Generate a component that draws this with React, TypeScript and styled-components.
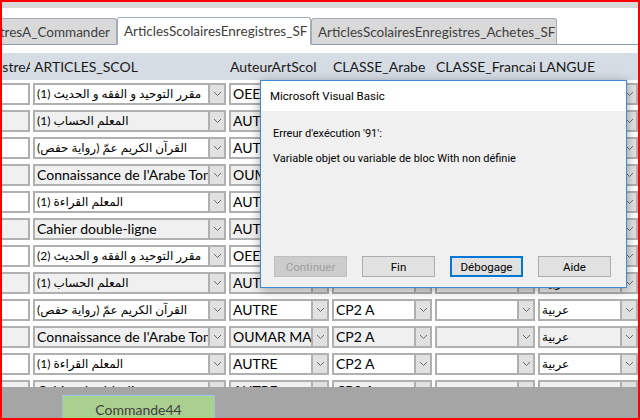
import React from 'react';
import styled, { createGlobalStyle } from 'styled-components';

const GlobalStyle = createGlobalStyle`
  html, body {
    margin: 0;
    padding: 0;
    background: #ffffff;
  }
  * {
    box-sizing: border-box;
  }
`;

type Article = {
  label: string;
  rtl?: boolean;
  auteur: string;
  arabe: string;
  francais: string;
  langue: string;
};

const articles: Article[] = [
  { label: 'مقرر التوحيد و الفقه و الحديث (1)', rtl: true, auteur: 'OEECI', arabe: 'CP2 A', francais: '', langue: 'عربية' },
  { label: 'المعلم الحساب (1)', rtl: true, auteur: 'AUTRE', arabe: 'CP2 A', francais: '', langue: 'عربية' },
  { label: 'القرآن الكريم عمّ (رواية حفص)', rtl: true, auteur: 'AUTRE', arabe: 'CP2 A', francais: '', langue: 'عربية' },
  { label: "Connaissance de l'Arabe Tome 1", auteur: 'OUMAR MAHAMAT', arabe: 'CP2 A', francais: '', langue: 'عربية' },
  { label: 'المعلم القراءة (1)', rtl: true, auteur: 'AUTRE', arabe: 'CP2 A', francais: '', langue: 'عربية' },
  { label: 'Cahier double-ligne', auteur: 'AUTRE', arabe: 'CP2 A', francais: '', langue: 'عربية' },
  { label: 'مقرر التوحيد و الفقه و الحديث (2)', rtl: true, auteur: 'OEECI', arabe: 'CP2 A', francais: '', langue: 'عربية' },
  { label: 'المعلم الحساب (1)', rtl: true, auteur: 'AUTRE', arabe: 'CP2 A', francais: '', langue: 'عربية' },
  { label: 'القرآن الكريم عمّ (رواية حفص)', rtl: true, auteur: 'AUTRE', arabe: 'CP2 A', francais: '', langue: 'عربية' },
  { label: "Connaissance de l'Arabe Tome 1", auteur: 'OUMAR MAHAMAT', arabe: 'CP2 A', francais: '', langue: 'عربية' },
  { label: 'المعلم القراءة (1)', rtl: true, auteur: 'AUTRE', arabe: 'CP2 A', francais: '', langue: 'عربية' },
  { label: 'Cahier double-ligne', auteur: 'AUTRE', arabe: 'CP2 A', francais: '', langue: 'عربية' },
];

function Chevron() {
  return (
    <svg width="9" height="6" viewBox="0 0 9 6">
      <polyline points="1,1 4.5,4.5 8,1" fill="none" stroke="#6b6b6b" strokeWidth="1" />
    </svg>
  );
}

function Combo({ width, text, rtl, alt }: { width: number; text: string; rtl?: boolean; alt: boolean }) {
  return (
    <ComboBox $width={width} $alt={alt}>
      <ComboText dir={rtl ? 'rtl' : 'ltr'} $rtl={rtl}>
        {text}
      </ComboText>
      <DropButton>
        <Chevron />
      </DropButton>
    </ComboBox>
  );
}

export default function App() {
  return (
    <>
      <GlobalStyle />
      <Frame>
        <TopBand />
        <TabStrip>
          <Tab>
            <TabLabel>ArticlesScolairesEnregistresA_Commander</TabLabel>
          </Tab>
          <Tab $active>
            <TabLabel>ArticlesScolairesEnregistres_SF</TabLabel>
          </Tab>
          <Tab>
            <TabLabel>ArticlesScolairesEnregistres_Achetes_SF</TabLabel>
          </Tab>
          <TabFiller />
        </TabStrip>
        <Spacer />
        <HeaderBand>
          <HeaderLabel $width={28} $clipStart>
            <span>EnregistreA</span>
          </HeaderLabel>
          <HeaderLabel $width={193}>ARTICLES_SCOL</HeaderLabel>
          <HeaderLabel $width={100}>AuteurArtScol</HeaderLabel>
          <HeaderLabel $width={100}>CLASSE_Arabe</HeaderLabel>
          <HeaderLabel $width={100}>CLASSE_Francais</HeaderLabel>
          <HeaderLabel $width={100}>LANGUE</HeaderLabel>
        </HeaderBand>
        <Detail>
          {articles.map((a, i) => {
            const alt = i % 2 === 1;
            return (
              <Row key={i}>
                <TextBox $alt={alt} />
                <Combo width={193} text={a.label} rtl={a.rtl} alt={alt} />
                <Combo width={100} text={a.auteur} alt={alt} />
                <Combo width={100} text={a.arabe} alt={alt} />
                <Combo width={100} text={a.francais} alt={alt} />
                <Combo width={100} text={a.langue} rtl alt={alt} />
              </Row>
            );
          })}
        </Detail>
        <Footer>
          <FooterButton>Commande44</FooterButton>
        </Footer>

        <Dialog>
          <DialogTitle>Microsoft Visual Basic</DialogTitle>
          <DialogBody>
            <Message>Erreur d'exécution '91':</Message>
            <Message>Variable objet ou variable de bloc With non définie</Message>
            <ButtonRow>
              <DialogButton disabled>Continuer</DialogButton>
              <DialogButton>Fin</DialogButton>
              <DialogButton $default>Débogage</DialogButton>
              <DialogButton>Aide</DialogButton>
            </ButtonRow>
          </DialogBody>
        </Dialog>
      </Frame>
    </>
  );
}

const Frame = styled.div`
  position: relative;
  width: 640px;
  height: 420px;
  border: 2px solid #ff0000;
  display: flex;
  flex-direction: column;
  overflow: hidden;
  background: #ffffff;
  font-family: Lato, 'DejaVu Sans', sans-serif;
`;

const TopBand = styled.div`
  height: 6px;
  flex: none;
  background: #d9d9d9;
`;

const TabStrip = styled.div`
  height: 37px;
  flex: none;
  display: flex;
  align-items: flex-end;
`;

const Tab = styled.div<{ $active?: boolean }>`
  height: ${(p) => (p.$active ? '28px' : '27px')};
  display: flex;
  align-items: center;
  padding: 0 6px;
  overflow: hidden;
  white-space: nowrap;
  background: ${(p) => (p.$active ? '#ffffff' : '#d9d9d9')};
  border: 1px solid #a3acb9;
  border-bottom: ${(p) => (p.$active ? '1px solid #ffffff' : '1px solid #8e9bb0')};
  border-radius: 3px 3px 0 0;
  color: #404040;
  font-size: 13.5px;

  &:first-child {
    width: 115px;
    justify-content: flex-end;
    border-left: none;
    border-radius: 0 3px 0 0;
  }
  &:nth-child(2) {
    width: 194px;
  }
  &:nth-child(3) {
    width: 246px;
  }
`;

const TabLabel = styled.span`
  flex: none;
`;

const TabFiller = styled.div`
  flex: 1;
  border-bottom: 1px solid #8e9bb0;
`;

const Spacer = styled.div`
  height: 8px;
  flex: none;
`;

const HeaderBand = styled.div`
  height: 27px;
  flex: none;
  display: flex;
  align-items: center;
  gap: 3px;
  background: #d6dce4;
  color: #1a1a1a;
  font-size: 14px;
`;

const HeaderLabel = styled.div<{ $width: number; $clipStart?: boolean }>`
  width: ${(p) => p.$width}px;
  flex: none;
  display: flex;
  justify-content: ${(p) => (p.$clipStart ? 'flex-end' : 'flex-start')};
  padding-left: 1px;
  overflow: hidden;
  white-space: nowrap;

  span {
    flex: none;
    margin-right: -5px;
  }
`;

const Detail = styled.div`
  height: 307px;
  flex: none;
  overflow: hidden;
`;

const Row = styled.div`
  height: 27px;
  padding-top: 3px;
  display: flex;
  gap: 3px;
`;

const TextBox = styled.div<{ $alt: boolean }>`
  width: 28px;
  height: 22px;
  flex: none;
  border: 2px solid #b0b0b0;
  border-left: none;
  background: ${(p) => (p.$alt ? '#f0f0f0' : '#ffffff')};
`;

const ComboBox = styled.div<{ $width: number; $alt: boolean }>`
  width: ${(p) => p.$width}px;
  height: 22px;
  flex: none;
  display: flex;
  border: 2px solid #b0b0b0;
  background: ${(p) => (p.$alt ? '#f0f0f0' : '#ffffff')};
  color: #000000;
  font-size: 14px;
`;

const ComboText = styled.div<{ $rtl?: boolean }>`
  flex: 1;
  min-width: 0;
  padding: 0 2px;
  line-height: 18px;
  overflow: hidden;
  white-space: nowrap;
  text-align: left;
  font-size: ${(p) => (p.$rtl ? '12px' : '14px')};
`;

const DropButton = styled.div`
  width: 16px;
  flex: none;
  display: flex;
  align-items: center;
  justify-content: center;
  background: #e1e1e1;
  border-left: 2px solid #b0b0b0;
`;

const Footer = styled.div`
  flex: 1;
  background: #a5a5a5;
  padding: 8px 0 0 60px;
`;

const FooterButton = styled.div`
  width: 153px;
  height: 28px;
  display: flex;
  justify-content: center;
  padding-top: 5px;
  background: #a9d08e;
  border: 1px solid #9dc3e6;
  color: #404040;
  font-size: 14px;
`;

const Dialog = styled.div`
  position: absolute;
  left: 258px;
  top: 78px;
  width: 367px;
  height: 208px;
  display: flex;
  flex-direction: column;
  background: #f0f0f0;
  border: 1px solid #3f8ad2;
  box-shadow: 0 2px 10px rgba(0, 0, 0, 0.35);
  font-family: Roboto, 'Liberation Sans', sans-serif;
  color: #000000;
`;

const DialogTitle = styled.div`
  height: 30px;
  flex: none;
  display: flex;
  align-items: center;
  padding-left: 9px;
  background: #ffffff;
  font-size: 11.5px;
`;

const DialogBody = styled.div`
  flex: 1;
  display: flex;
  flex-direction: column;
  padding: 16px 13px 10px 12px;
`;

const Message = styled.div`
  font-size: 11px;
  line-height: 14px;
  margin-bottom: 11px;
`;

const ButtonRow = styled.div`
  margin-top: auto;
  display: flex;
  gap: 15px;
  padding-left: 1px;
`;

const DialogButton = styled.button<{ $default?: boolean }>`
  width: 73px;
  height: 21px;
  padding: 0;
  font-family: Roboto, 'Liberation Sans', sans-serif;
  font-size: 11.5px;
  color: #000000;
  background: #e1e1e1;
  border: ${(p) => (p.$default ? '2px solid #0078d7' : '1px solid #adadad')};

  &:disabled {
    color: #a0a0a0;
    background: #cccccc;
    border-color: #bfbfbf;
  }
`;
